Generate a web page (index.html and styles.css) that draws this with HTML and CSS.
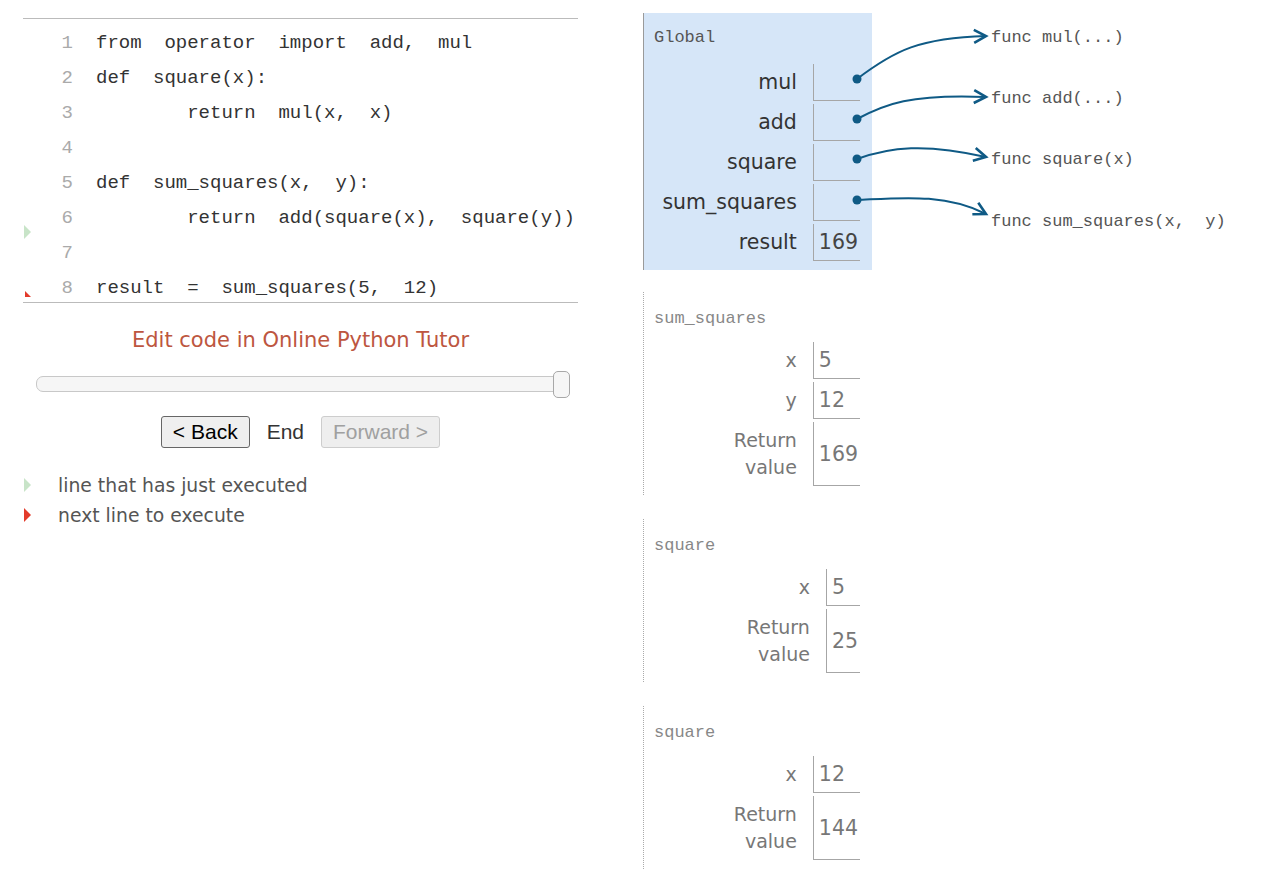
FILE: index.html
```html
<!DOCTYPE html>
<html>
<head>
<meta charset="utf-8">
<title>Python Tutor</title>
<link rel="stylesheet" href="styles.css">
</head>
<body>
<div class="app">
  <div class="left">
    <div class="code">
      <div class="row"><span class="ln">1</span><span class="src">from  operator  import  add,  mul</span></div>
      <div class="row"><span class="ln">2</span><span class="src">def  square(x):</span></div>
      <div class="row"><span class="ln">3</span><span class="src">        return  mul(x,  x)</span></div>
      <div class="row"><span class="ln">4</span><span class="src"></span></div>
      <div class="row"><span class="ln">5</span><span class="src">def  sum_squares(x,  y):</span></div>
      <div class="row"><span class="ln">6</span><span class="src">        return  add(square(x),  square(y))</span></div>
      <div class="row"><span class="ln">7</span><span class="src"></span></div>
      <div class="row"><span class="ln">8</span><span class="src">result  =  sum_squares(5,  12)</span></div>
      <svg class="arrow-prev" width="8" height="14" viewBox="0 0 8 14"><polygon points="0,0 7,7 0,14" fill="#c8e4c8"/></svg>
      <svg class="arrow-next" width="7" height="7" viewBox="0 0 7 7"><polygon points="0,0 0,6 6,6" fill="#e33b2b"/></svg>
    </div>
    <a class="edit">Edit code in Online Python Tutor</a>
    <div class="slider">
      <div class="track"></div>
      <div class="handle"></div>
    </div>
    <div class="controls">
      <button class="btn">&lt; Back</button>
      <span class="end">End</span>
      <button class="btn disabled">Forward &gt;</button>
    </div>
    <div class="legend">
      <div class="legend-row">
        <svg width="8" height="14" viewBox="0 0 8 14"><polygon points="0,0 7,7 0,14" fill="#c8e4c8"/></svg>
        <span>line that has just executed</span>
      </div>
      <div class="legend-row">
        <svg width="8" height="14" viewBox="0 0 8 14"><polygon points="0,0 7,7 0,14" fill="#e33b2b"/></svg>
        <span>next line to execute</span>
      </div>
    </div>
  </div>

  <div class="viz">
    <div class="frame global">
      <div class="title">Global</div>
      <div class="vars">
        <div class="name">mul</div><div class="val"></div>
        <div class="name">add</div><div class="val"></div>
        <div class="name">square</div><div class="val"></div>
        <div class="name">sum_squares</div><div class="val"></div>
        <div class="name">result</div><div class="val">169</div>
      </div>
    </div>
    <div class="frame stackframe">
      <div class="title">sum_squares</div>
      <div class="vars">
        <div class="name">x</div><div class="val">5</div>
        <div class="name">y</div><div class="val">12</div>
        <div class="name ret">Return<br>value</div><div class="val">169</div>
      </div>
    </div>
    <div class="frame stackframe">
      <div class="title">square</div>
      <div class="vars">
        <div class="name">x</div><div class="val">5</div>
        <div class="name ret">Return<br>value</div><div class="val">25</div>
      </div>
    </div>
    <div class="frame stackframe">
      <div class="title">square</div>
      <div class="vars">
        <div class="name">x</div><div class="val">12</div>
        <div class="name ret">Return<br>value</div><div class="val">144</div>
      </div>
    </div>
  </div>

  <div class="func f1">func mul(...)</div>
  <div class="func f2">func add(...)</div>
  <div class="func f3">func square(x)</div>
  <div class="func f4">func sum_squares(x,  y)</div>

  <svg class="links" width="1270" height="884" viewBox="0 0 1270 884">
    <defs>
      <marker id="head" markerUnits="userSpaceOnUse" markerWidth="20" markerHeight="20" refX="15" refY="8" orient="auto">
        <polyline points="3,1.5 15,8 3,14.5" fill="none" stroke="#0f5a85" stroke-width="2.6" stroke-linejoin="miter"/>
      </marker>
    </defs>
    <g fill="none" stroke="#0f5a85" stroke-width="2">
      <path d="M857,79 C895,50 920,38 986,36" marker-end="url(#head)"/>
      <path d="M857,119 C885,104 910,94 986,97" marker-end="url(#head)"/>
      <path d="M857,159 C890,147 925,143 986,157" marker-end="url(#head)"/>
      <path d="M857,200 C900,198 945,193 986,214" marker-end="url(#head)"/>
    </g>
    <g fill="#0f5a85">
      <circle cx="857" cy="79" r="4.5"/>
      <circle cx="857" cy="119" r="4.5"/>
      <circle cx="857" cy="159" r="4.5"/>
      <circle cx="857" cy="200" r="4.5"/>
    </g>
  </svg>
</div>
</body>
</html>
```

FILE: styles.css
```css
body {
  margin: 0;
  font-family: "DejaVu Sans", sans-serif;
  background: #fff;
}

.app {
  position: relative;
  display: flex;
  align-items: flex-start;
  min-height: 884px;
}

/* ---------- left column ---------- */
.left {
  margin-left: 23px;
  width: 555px;
  padding-top: 18px;
}

.code {
  position: relative;
  box-sizing: border-box;
  height: 285px;
  padding-top: 7px;
  border-top: 1px solid #bbb;
  border-bottom: 1px solid #bbb;
  overflow: hidden;
}

.row {
  display: flex;
  height: 35px;
  line-height: 35px;
  font-family: "Liberation Mono", monospace;
  font-size: 19px;
}

.ln {
  width: 50px;
  text-align: right;
  color: #aaa;
}

.src {
  margin-left: 23px;
  white-space: pre;
  color: #333;
}

.arrow-prev {
  position: absolute;
  left: 1px;
  top: 206px;
}

.arrow-next {
  position: absolute;
  left: 2px;
  top: 272px;
}

.edit {
  display: block;
  margin-top: 25px;
  text-align: center;
  font-size: 21px;
  line-height: 24px;
  color: #bd5640;
  cursor: pointer;
}

.slider {
  position: relative;
  height: 27px;
  padding-top: 5px;
  box-sizing: border-box;
  margin: 19px 8px 0 13px;
}

.track {
  box-sizing: border-box;
  height: 16px;
  border: 1px solid #c8c8c8;
  border-radius: 7px;
  background: #f6f6f6;
}

.handle {
  position: absolute;
  right: 0;
  top: 0;
  box-sizing: border-box;
  width: 17px;
  height: 27px;
  border: 1px solid #a8a8a8;
  border-radius: 5px;
  background: #f6f6f6;
}

.controls {
  display: flex;
  justify-content: center;
  align-items: center;
  gap: 17px;
  margin-top: 18px;
}

.btn {
  box-sizing: border-box;
  height: 32px;
  padding: 0 11px;
  font-family: "Liberation Sans", sans-serif;
  font-size: 21px;
  color: #000;
  background: #efefef;
  border: 1px solid #666;
  border-radius: 3px;
}

.btn.disabled {
  color: #a0a0a0;
  background: #eee;
  border-color: #cdcdcd;
}

.end {
  font-family: "Liberation Sans", sans-serif;
  font-size: 21px;
  color: #333;
}

.legend {
  margin-top: 22px;
}

.legend-row {
  display: flex;
  align-items: center;
  height: 30px;
  font-size: 18.8px;
  color: #555;
}

.legend-row svg {
  margin-left: 1px;
}

.legend-row span {
  margin-left: 26px;
}

/* ---------- visualization ---------- */
.viz {
  margin-left: 65px;
  padding-top: 13px;
  width: 229px;
}

.frame {
  box-sizing: border-box;
  width: 229px;
}

.global {
  background: #d6e6f8;
  border-left: 1px solid #9a9a9a;
  padding: 12px 12px 9px 10px;
  margin-bottom: 22px;
}

.stackframe {
  border-left: 1px dotted #aaa;
  padding: 14px 12px 9px 10px;
  margin-bottom: 24px;
}

.title {
  font-family: "Liberation Mono", monospace;
  font-size: 17px;
  line-height: 26px;
  color: #555;
}

.stackframe .title {
  color: #888;
}

.vars {
  display: grid;
  grid-template-columns: auto auto;
  justify-content: end;
  row-gap: 3px;
  margin-top: 13px;
}

.stackframe .vars {
  margin-top: 10px;
}

.name {
  display: flex;
  align-items: center;
  justify-content: flex-end;
  padding-right: 16px;
  font-size: 20.5px;
  line-height: 27px;
  text-align: right;
  color: #333;
}

.stackframe .name {
  font-size: 19px;
  color: #777;
}

.name.ret {
  padding-top: 5px;
  padding-bottom: 5px;
}

.val {
  box-sizing: border-box;
  display: flex;
  align-items: center;
  min-height: 37px;
  padding: 0 2px 0 5px;
  border-left: 1px solid #a6a6a6;
  border-bottom: 1px solid #a6a6a6;
  font-size: 20.5px;
  color: #444;
}

.stackframe .val {
  color: #777;
}

/* ---------- heap objects & pointers ---------- */
.func {
  position: absolute;
  left: 991px;
  font-family: "Liberation Mono", monospace;
  font-size: 17px;
  line-height: 20px;
  white-space: pre;
  color: #555;
}

.f1 { top: 28px; }
.f2 { top: 89px; }
.f3 { top: 150px; }
.f4 { top: 212px; }

.links {
  position: absolute;
  left: 0;
  top: 0;
  pointer-events: none;
}
```
